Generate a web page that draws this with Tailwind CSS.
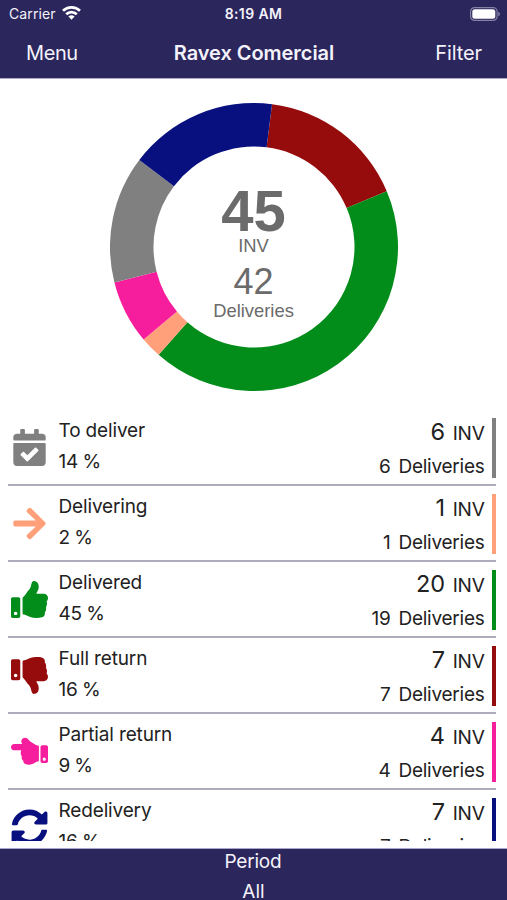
<!DOCTYPE html>
<html lang="en">
<head>
  <meta charset="UTF-8" />
  <meta name="viewport" content="width=device-width, initial-scale=1.0" />
  <title>Ravex Comercial</title>
  <script src="https://cdn.jsdelivr.net/npm/@tailwindcss/browser@4"></script>
</head>
<body class="bg-white font-['Inter',sans-serif] text-[#222]">
  <div class="w-[507px] h-[900px] flex flex-col overflow-hidden">
    <header class="h-[79px] shrink-0 bg-[#2b265c] border-b border-[#aaa6cc] text-[#f4f2fb]">
      <div class="h-7 grid grid-cols-3 items-center pl-[9px] pr-[7px] text-[14px]">
        <div class="flex items-center gap-[6px] -mt-[2px]">
          <span class="tracking-[0.1px]">Carrier</span>
          <svg class="w-[19px] h-[14px]" viewBox="0 0 19 14" fill="none" stroke="#fff" stroke-width="2.7">
            <path d="M1 4.8C5.700 .2 13.300 .2 18 4.800" />
            <path d="M4.200 8.300C7.200 5.300 11.800 5.300 14.800 8.300" />
            <path d="M9.500 13.700L6.400 10.500C8.200 8.900 10.800 8.900 12.600 10.500Z" fill="#fff" stroke="none" />
          </svg>
        </div>
        <span class="text-center font-semibold tracking-[0.4px] -ml-[2px] -mt-[1px]">8:19 AM</span>
        <svg class="w-[30px] h-[14px] justify-self-end -mt-[1px]" viewBox="0 0 30 14">
          <rect x=".6" y=".6" width="26.500" height="12.800" rx="4" fill="none" stroke="#8581a5" stroke-width="1.200" />
          <rect x="2.300" y="2.300" width="23" height="9.400" rx="2.500" fill="#fff" />
          <path d="M28.200 4.800Q30 5.500 30 7T28.200 9.200Z" fill="#8581a5" />
        </svg>
      </div>
      <div class="h-[50px] grid grid-cols-[1fr_auto_1fr] items-center pl-[26px] pr-[25px] text-[20px]">
        <span class="tracking-[-0.4px]">Menu</span>
        <h1 class="font-semibold tracking-[-0.05px]">Ravex Comercial</h1>
        <span class="text-right tracking-[-0.1px]">Filter</span>
      </div>
    </header>

    <section class="h-[331px] shrink-0 grid place-items-center">
      <div class="col-start-1 row-start-1 mt-1">
        <svg id="donut" class="w-[288px] h-[288px]" viewBox="-144 -144 288 288"></svg>
      </div>
      <div class="col-start-1 row-start-1 flex flex-col items-center font-['Liberation_Sans',sans-serif] text-[#6b6b6b] pt-[17px]">
        <div class="text-[58px] leading-[50px] font-bold">45</div>
        <div class="text-[18.4px] leading-[20px]">INV</div>
        <div class="text-[36px] leading-[40px] mt-[6px]">42</div>
        <div class="text-[18.4px] leading-[18px]">Deliveries</div>
      </div>
    </section>

    <main id="list" class="h-[431px] shrink-0 overflow-hidden pl-[8px] pr-[11px]"></main>

    <footer class="mt-[7px] flex-1 bg-[#2b265c] border-t border-[#aaa6cc] text-[#f4f2fb] text-[19px] text-center">
      <div class="h-[25px] leading-[25px] tracking-[-0.2px] -ml-[1px]">Period</div>
      <div class="h-[26px] leading-[35px]">All</div>
    </footer>
  </div>

  <script>
    const icons = {
      calendar: ["0 0 448 512", "w-[33px] h-[37px]", "M436 160H12c-6.627 0-12-5.373-12-12v-36c0-26.51 21.49-48 48-48h48V12c0-6.627 5.373-12 12-12h40c6.627 0 12 5.373 12 12v52h128V12c0-6.627 5.373-12 12-12h40c6.627 0 12 5.373 12 12v52h48c26.51 0 48 21.49 48 48v36c0 6.627-5.373 12-12 12zM12 192h424c6.627 0 12 5.373 12 12v260c0 26.51-21.49 48-48 48H48c-26.51 0-48-21.49-48-48V204c0-6.627 5.373-12 12-12zm333.296 95.947l-28.169-28.398c-4.667-4.705-12.265-4.736-16.97-.068L194.12 364.665l-45.98-46.352c-4.667-4.705-12.266-4.736-16.971-.068l-28.397 28.17c-4.705 4.667-4.736 12.265-.068 16.97l82.601 83.269c4.667 4.705 12.265 4.736 16.97.068l142.953-141.805c4.705-4.667 4.736-12.265.068-16.97z"],
      arrow: ["0 0 448 512", "w-[33px] h-[37px]", "M190.5 66.9l22.2-22.2c9.4-9.4 24.6-9.4 33.9 0L441 239c9.4 9.4 9.4 24.6 0 33.9L246.6 467.3c-9.4 9.4-24.6 9.4-33.9 0l-22.2-22.2c-9.5-9.5-9.3-25 .4-34.3L311.4 296H24c-13.3 0-24-10.7-24-24v-32c0-13.3 10.7-24 24-24h287.4L190.9 101.2c-9.8-9.3-10-24.8-.4-34.3z"],
      thumbUp: ["0 0 512 512", "w-[37px] h-[37px]", "M104 224H24c-13.255 0-24 10.745-24 24v240c0 13.255 10.745 24 24 24h80c13.255 0 24-10.745 24-24V248c0-13.255-10.745-24-24-24zM64 472c-13.255 0-24-10.745-24-24s10.745-24 24-24 24 10.745 24 24-10.745 24-24 24zM384 81.452c0 42.416-25.97 66.208-33.277 94.548h101.723c33.397 0 59.397 27.746 59.553 58.098.084 17.938-7.546 37.249-19.439 49.197l-.11.11c9.836 23.337 8.237 56.037-9.308 79.469 8.681 25.895-.069 57.704-16.382 74.757 4.298 17.598 2.244 32.575-6.148 44.632C440.202 511.587 389.616 512 346.839 512l-2.845-.001c-48.287-.017-87.806-17.598-119.56-31.725-15.957-7.099-36.821-15.887-52.651-16.178-6.54-.12-11.783-5.457-11.783-11.998v-213.77c0-3.2 1.282-6.271 3.558-8.521 39.614-39.144 56.648-80.587 89.117-113.111 14.804-14.832 20.188-37.236 25.393-58.902C282.515 39.293 291.817 0 312 0c24 0 72 8 72 81.452z"],
      thumbDown: ["0 0 512 512", "w-[37px] h-[37px]", "M0 56v240c0 13.255 10.745 24 24 24h80c13.255 0 24-10.745 24-24V56c0-13.255-10.745-24-24-24H24C10.745 32 0 42.745 0 56zm40 200c0-13.255 10.745-24 24-24s24 10.745 24 24-10.745 24-24 24-24-10.745-24-24zm272 256c-20.183 0-29.485-39.293-33.931-57.795-5.206-21.666-10.589-44.07-25.393-58.902-32.469-32.524-49.503-73.967-89.117-113.111a11.98 11.98 0 0 1-3.558-8.521V59.901c0-6.541 5.243-11.878 11.783-11.998 15.831-.29 36.694-9.079 52.651-16.178C256.189 17.598 295.709.017 343.995 0h2.844c42.777 0 93.363.413 113.774 29.737 8.392 12.057 10.446 27.034 6.148 44.632 16.312 17.053 25.063 48.863 16.382 74.757 17.544 23.432 19.143 56.132 9.308 79.469l.11.11c11.893 11.949 19.523 31.259 19.439 49.197-.156 30.352-26.157 58.098-59.553 58.098H350.723C358.03 364.34 384 388.132 384 430.548 384 504 336 512 312 512z"],
      pointLeft: ["0 0 512 512", "w-[37px] h-[37px]", "M45 152h110c-8-12-14-24-13-42 2-28 26-46 52-46 20 0 36 10 46 26 18 26 44 40 76 58 24 14 42 24 60 26 6 0 10 6 10 12v198c0 7-5 12-12 12-40 2-66 42-122 42-54 0-84-18-82-56-18-10-28-38-20-62-18-18-20-46-8-80H45c-24 0-45-20-45-44 0-23 20-44 45-44zM432 168h56q24 0 24 24v200q0 24-24 24h-56q-24 0-24-24V192q0-24 24-24zm28 172a22 22 0 1 0 0 44 22 22 0 1 0 0-44z"],
      sync: ["0 0 512 512", "w-[37px] h-[37px]", "M370.72 133.28C339.458 104.008 298.888 87.962 255.848 88c-77.458.068-144.328 53.178-162.791 126.85-1.344 5.363-6.122 9.15-11.651 9.15H24.103c-7.498 0-13.194-6.807-11.807-14.176C33.933 94.924 134.813 8 256 8c66.448 0 126.791 26.136 171.315 68.685L463.03 40.97C478.149 25.851 504 36.559 504 57.941V192c0 13.255-10.745 24-24 24H345.941c-21.382 0-32.09-25.851-16.971-40.971l41.75-41.749zM32 296h134.059c21.382 0 32.09 25.851 16.971 40.971l-41.75 41.75c31.262 29.273 71.835 45.319 114.876 45.28 77.418-.07 144.315-53.144 162.787-126.849 1.344-5.363 6.122-9.15 11.651-9.15h57.304c7.498 0 13.194 6.807 11.807 14.176C478.067 417.076 377.187 504 256 504c-66.448 0-126.791-26.136-171.315-68.685L48.97 471.03C33.851 486.149 8 475.441 8 454.059V320c0-13.255 10.745-24 24-24z"]
    };

    const rows = [
      { name: "To deliver", pct: 14, inv: 6, del: 6, color: "#808080", icon: "calendar" },
      { name: "Delivering", pct: 2, inv: 1, del: 1, color: "#ffa07a", icon: "arrow" },
      { name: "Delivered", pct: 45, inv: 20, del: 19, color: "#028c1a", icon: "thumbUp" },
      { name: "Full return", pct: 16, inv: 7, del: 7, color: "#960c0c", icon: "thumbDown" },
      { name: "Partial return", pct: 9, inv: 4, del: 4, color: "#f71e9d", icon: "pointLeft" },
      { name: "Redelivery", pct: 16, inv: 7, del: 7, color: "#07107e", icon: "sync" }
    ];

    function renderRows() {
      document.getElementById("list").innerHTML = rows.map(r => {
        const [box, size, path] = icons[r.icon];
        return `
        <div class="h-[76.1px] flex border-b-2 border-[#adadbd]">
          <div class="w-[43px] flex items-center justify-center">
            <svg class="${size}" viewBox="${box}" fill="${r.color}"><path fill-rule="evenodd" d="${path}" /></svg>
          </div>
          <div class="pl-[7.5px] pt-[4.5px] text-[19px] leading-[31px] tracking-[-0.15px] flex-1">
            <div>${r.name}</div>
            <div class="[word-spacing:-1px]">${r.pct} %</div>
          </div>
          <div class="pt-[4.5px] text-right text-[19px] tracking-[-0.25px]">
            <div class="h-[34px] leading-[34px]"><span class="text-[23.5px] mr-2">${r.inv}</span>INV</div>
            <div class="h-[34px] leading-[36px]"><span class="mr-2">${r.del}</span>Deliveries</div>
          </div>
          <div class="w-1 h-[60px] mt-[8px] ml-[7.5px]" style="background:${r.color}"></div>
        </div>`;
      }).join("");
    }

    function drawDonut() {
      const slices = [[7, "#960c0c"], [18, "#028c1a"], [1, "#ffa07a"], [3, "#f71e9d"], [6, "#808080"], [7, "#07107e"]];
      const total = slices.reduce((s, x) => s + x[0], 0);
      const point = (radius, deg) => {
        const a = deg * Math.PI / 180;
        return (radius * Math.sin(a)).toFixed(2) + " " + (-radius * Math.cos(a)).toFixed(2);
      };
      let start = 7.2;
      let html = "";
      slices.forEach(([value, color]) => {
        const end = start + value / total * 360;
        const large = end - start > 180 ? 1 : 0;
        html += `<path fill="${color}" d="M${point(144, start)}A144 144 0 ${large} 1 ${point(144, end)}L${point(100.5, end)}A100.5 100.5 0 ${large} 0 ${point(100.5, start)}Z" />`;
        start = end;
      });
      document.getElementById("donut").innerHTML = html;
    }

    renderRows();
    drawDonut();
  </script>
</body>
</html>
